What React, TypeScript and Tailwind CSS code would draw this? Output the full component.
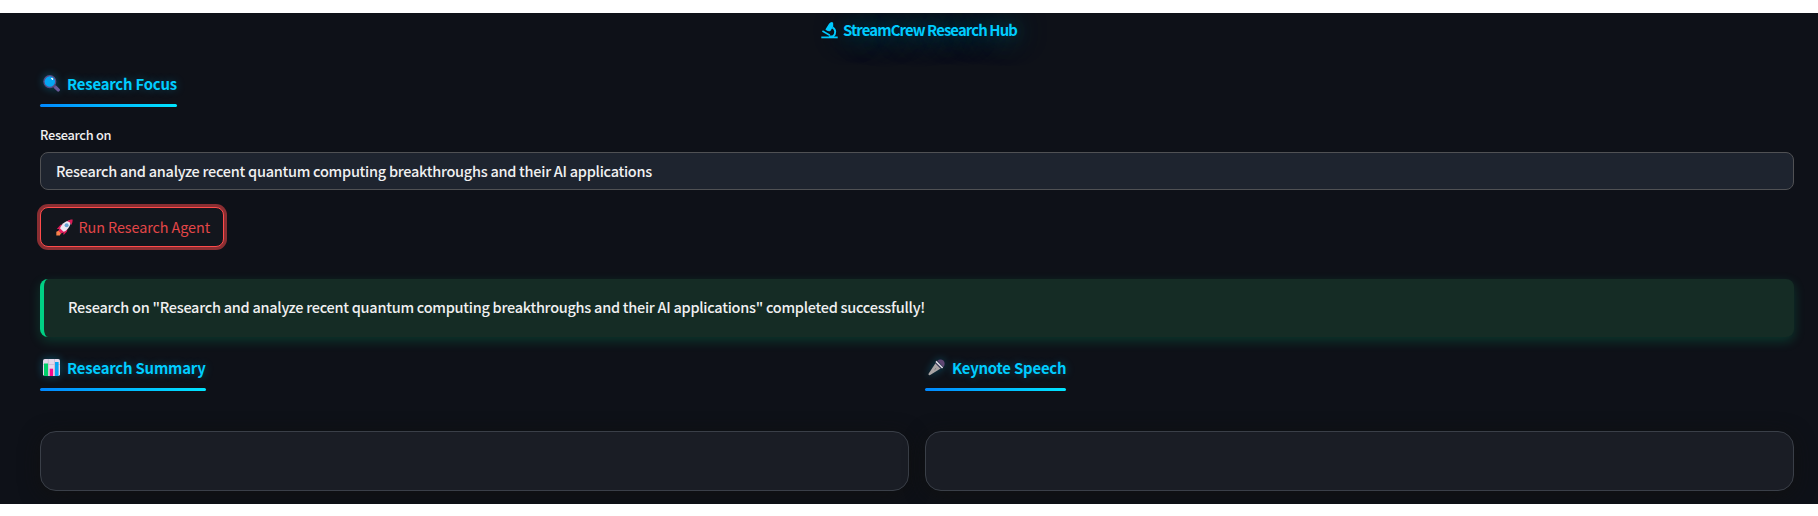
import React from 'react';

function SearchIcon() {
  return (
    <svg width="17" height="17" viewBox="0 0 17 17" className="block">
      <path d="M12.2 12L15.2 14.9" stroke="#6a5a9a" strokeWidth="3.4" strokeLinecap="round" />
      <path d="M10 10L12 12" stroke="#5a4b85" strokeWidth="1.6" />
      <circle cx="6.8" cy="6.6" r="5.9" fill="#05a6f2" stroke="#5a4b85" strokeWidth="1.3" />
      <path d="M8.4 3.4L9.6 3.4L9.6 4.8Z" fill="#fff" stroke="#fff" strokeWidth="1" />
    </svg>
  );
}

function ChartIcon() {
  return (
    <svg width="17" height="17" viewBox="0 0 17 17" className="block">
      <rect width="17" height="17" rx="1.8" fill="#e3d8ea" />
      <path d="M0 5.5H17M5.3 0V17M11.5 0V17" stroke="#c5b8d2" strokeWidth="0.8" />
      <rect x="1" y="4.5" width="4" height="12.5" fill="#00d06a" />
      <rect x="6.7" y="9.7" width="3.4" height="7.3" fill="#f70a8d" />
      <rect x="12" y="3" width="3.6" height="14" fill="#05a6f2" />
    </svg>
  );
}

function MicIcon() {
  return (
    <svg width="17" height="17" viewBox="0 0 17 17" className="block">
      <path d="M7.5 4.2L12.6 9.4L2.2 16C1 16.6 0 15.8 0.7 14.5Z" fill="#a9a4a4" />
      <path d="M6.5 10.8L8.2 9.2" stroke="#77717a" strokeWidth="1" />
      <path d="M9.4 1.6C12-.6 17 .5 16.6 4.8C16.6 6.4 16 7.4 15.2 8Z" fill="#5e4673" />
      <path d="M8 2.4L14.6 9" stroke="#e0d8e6" strokeWidth="1.6" />
      <path d="M7.6 4L12.6 9.2" stroke="#574468" strokeWidth="1" />
    </svg>
  );
}

function RocketIcon() {
  return (
    <svg width="17" height="17" viewBox="0 0 17 17" className="block">
      <path d="M0.8 10L4.6 5.8L8 5.4L6 10ZM7.6 16L11 12.4L11.4 9L7 11Z" fill="#d81b55" />
      <path d="M0.3 16.4V12.8L3 11.6L5.2 14L3.8 16.4Z" fill="#f9804a" />
      <path d="M3.4 11.2C4.6 6 9 1.6 14.6 1.6C15.4 7 11 12.4 5.8 13.6Z" fill="#eee6f1" />
      <path d="M11 2.2C12.6 1 15 .4 16.6.5C16.7 2.2 16.4 4.2 15.2 6C14.8 4 13.4 2.6 11 2.2Z" fill="#d81b55" />
      <path d="M2.4 11.4L4 9.2L7.8 13L5.4 14.6Z" fill="#e81e63" />
      <circle cx="10.6" cy="6.2" r="2" fill="#68a5d4" />
    </svg>
  );
}

function MicroscopeIcon() {
  return (
    <svg width="17" height="17" viewBox="0 0 17 17" className="block" fill="none" stroke="#00ccff">
      <path d="M0.3 15.4H16.7" strokeWidth="1.8" />
      <path d="M4.4 7.4L8 1.8Q9.2 .2 11 .1Q12.6.4 12.2 2L12.2 4.6L9.4 9Q6.4 9.8 4.4 7.4Z" fill="#00ccff" stroke="none" />
      <path d="M1.4 9L8.8 13.2" strokeWidth="1.6" />
      <path d="M11.4 5.4C15 7.4 15.2 12 11.8 14.8" strokeWidth="1.9" />
      <path d="M8 14.2H13" strokeWidth="1.4" />
    </svg>
  );
}

function SectionTitle({ icon, children }: { icon: React.ReactNode; children: React.ReactNode }) {
  return (
    <h2 className="flex w-fit flex-col">
      <span className="flex h-[31px] items-start pl-[3px]">
        <span className="mt-[2px] drop-shadow-[0_0_4px_rgba(0,200,255,0.35)]">{icon}</span>
        <span className="ml-[7px] text-[14.9px] leading-[22px] font-bold tracking-[-0.2px] whitespace-nowrap text-[#00ccff] [text-shadow:0_0_10px_rgba(0,204,255,0.3)]">
          {children}
        </span>
      </span>
      <span className="h-[3px] rounded-[2px] bg-linear-to-r from-[#0088ff] to-[#00e5ff]" />
    </h2>
  );
}

function Card() {
  return <div className="h-[60px] rounded-2xl border border-[#3a3f48] bg-[#1a1d25] shadow-[0_4px_20px_rgba(17,17,17,0.9)]" />;
}

export default function App() {
  return (
    <div className="h-[516px] bg-white py-[13px] pb-[12px] font-['Noto_Sans_CJK_SC',sans-serif]">
      <main className="flex h-[491px] flex-col overflow-hidden bg-[#0e1118] pr-6 pl-10 text-[#f0f0f1]">
        <h1 className="flex h-[60px] justify-center pt-[8px] pl-[4px]">
          <span className="mt-[1px] h-[17px]"><MicroscopeIcon /></span>
          <span className="-mt-px ml-[5px] text-[14.9px] leading-[20px] font-bold tracking-[-0.9px] whitespace-nowrap text-[#00ccff] [text-shadow:0_0_30px_rgba(0,229,255,0.5),0_0_20px_rgba(0,229,255,0.2)]">
            StreamCrew Research Hub
          </span>
        </h1>
        <SectionTitle icon={<SearchIcon />}>Research Focus</SectionTitle>
        <label className="mt-[18px] h-[27px] text-[12.8px] leading-[20px] font-medium tracking-[-0.3px]">Research on</label>
        <div className="flex h-[38px] shrink-0 items-center rounded-lg border border-[#505154] bg-[#1e242f] pl-[15px] text-[14.5px] font-medium tracking-[-0.265px] whitespace-nowrap">
          <span>Research and analyze recent quantum computing breakthroughs and their AI applications</span>
        </div>
        <button className="mt-[17px] flex h-[40px] w-[184px] shrink-0 items-center rounded-lg border border-[#ff4b4b] bg-[#13161d] pl-[15px] text-[14.4px] tracking-[-0.08px] whitespace-nowrap text-[#e34648] shadow-[0_0_0_3px_#8a2e32]">
          <RocketIcon />
          <span className="ml-[5.5px]">Run Research Agent</span>
        </button>
        <div className="mt-8 flex h-[58px] shrink-0 items-center rounded-lg border-l-4 border-[#00d084] bg-[#152c25] pb-[2px] pl-6 text-[14.5px] font-medium tracking-[-0.265px] whitespace-nowrap shadow-[0_4px_12px_rgba(0,208,132,0.2)]">
          <span>Research on "Research and analyze recent quantum computing breakthroughs and their AI applications" completed successfully!</span>
        </div>
        <div className="mt-[20px] grid grid-cols-2 gap-x-4 gap-y-10">
          <SectionTitle icon={<ChartIcon />}>Research Summary</SectionTitle>
          <SectionTitle icon={<MicIcon />}>Keynote Speech</SectionTitle>
          <Card />
          <Card />
        </div>
      </main>
    </div>
  );
}
